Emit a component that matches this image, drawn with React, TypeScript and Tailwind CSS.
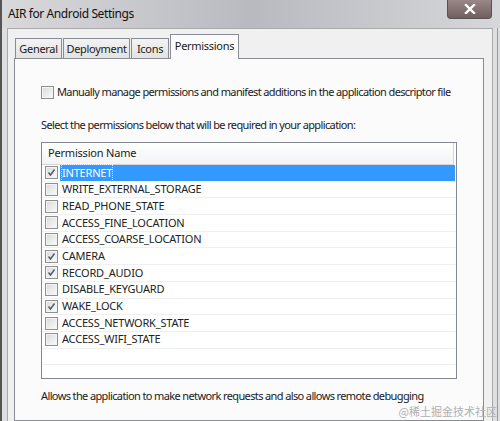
import React from "react";

const perms: { name: string; checked: boolean }[] = [
  { name: "INTERNET", checked: true },
  { name: "WRITE_EXTERNAL_STORAGE", checked: false },
  { name: "READ_PHONE_STATE", checked: false },
  { name: "ACCESS_FINE_LOCATION", checked: false },
  { name: "ACCESS_COARSE_LOCATION", checked: false },
  { name: "CAMERA", checked: true },
  { name: "RECORD_AUDIO", checked: true },
  { name: "DISABLE_KEYGUARD", checked: false },
  { name: "WAKE_LOCK", checked: true },
  { name: "ACCESS_NETWORK_STATE", checked: false },
  { name: "ACCESS_WIFI_STATE", checked: false },
];

function Check({ checked }: { checked: boolean }) {
  return (
    <div className="w-[13px] h-[13px] border border-[#8e8f8f] bg-[#f4f4f4] p-[1px] shrink-0">
      <div className="w-full h-full bg-gradient-to-br from-[#dcdcdc] to-[#f8f8f8] relative">
        {checked && (
          <svg viewBox="0 0 9 9" className="absolute inset-0 w-full h-full">
            <path d="M1.5 4.5 L3.5 7 L7.5 1.5" stroke="#4a5a6a" strokeWidth="1.4" fill="none" />
          </svg>
        )}
      </div>
    </div>
  );
}

const tabs: { label: string; w: string }[] = [
  { label: "General", w: "w-[47px]" },
  { label: "Deployment", w: "w-[67px]" },
  { label: "Icons", w: "w-[38px]" },
];

export default function App() {
  return (
    <div
      className="relative w-[500px] h-[421px] overflow-hidden flex flex-col bg-[#d4d5d8] text-[#1a1a1a]"
      style={{ fontFamily: '"Noto Sans", "Open Sans", sans-serif' }}
    >
      {/* Title bar */}
      <div className="h-[28px] shrink-0 flex items-start bg-gradient-to-r from-[#d9d9db] via-[#b9bac0] to-[#d6d7d9] border-l-2 border-[#555]">
        <div className="pl-[6px] pt-[6px] text-[12px] leading-[16px] tracking-[-0.4px] text-[#111] flex-1">AIR for Android Settings</div>
        <div className="w-[45px] h-[19px] mr-[8px] rounded-b-[4px] border border-t-0 border-[#5e4f50] bg-gradient-to-b from-[#9a8888] to-[#705f60] flex items-center justify-center">
          <svg viewBox="0 0 12 10" className="w-[12px] h-[10px]">
            <path d="M2 1 L10 9 M10 1 L2 9" stroke="#fff" strokeWidth="2.4" strokeLinecap="square" />
          </svg>
        </div>
      </div>
      {/* Body */}
      <div className="flex-1 flex min-h-0">
        <div className="w-[7px] shrink-0 bg-[#dedfe1] border-l-2 border-[#555]" />
        <div className="flex-1 min-w-0 bg-[#f0f0f0] border-l border-t border-[#a9a9a9] pl-[6px] pr-[8px] pt-[5px] flex flex-col">
          {/* Tabs */}
          <div className="flex items-end h-[24px] pl-[1px] relative z-10 text-[11px] tracking-[-0.3px]">
            {tabs.map((t) => (
              <div
                key={t.label}
                className={`${t.w} h-[20px] mr-[1px] border border-b-0 border-[#898c95] bg-gradient-to-b from-[#f3f3f3] to-[#e2e2e2] flex items-center justify-center leading-none`}
              >
                {t.label}
              </div>
            ))}
            <div className="w-[69px] h-[25px] -mb-[1px] border border-b-0 border-[#898c95] bg-[#fbfbfb] flex items-center justify-center leading-none pb-[3px]">
              Permissions
            </div>
          </div>
          {/* Panel */}
          <div className="flex-1 border border-[#898c95] bg-[#fbfbfb] pl-[26px] pt-[26px] text-[11px] tracking-[-0.62px]">
            <div className="flex items-center gap-[3px] h-[14px] whitespace-nowrap">
              <Check checked={false} />
              <span>Manually manage permissions and manifest additions in the application descriptor file</span>
            </div>
            <div className="mt-[19px] h-[14px] flex items-center whitespace-nowrap">
              Select the permissions below that will be required in your application:
            </div>
            <div className="mt-[10px] w-[416px] h-[237px] border border-[#828790] bg-white overflow-hidden flex flex-col tracking-[-0.2px]">
              <div className="h-[22px] shrink-0 w-[412px] border-b border-[#d5d5d5] bg-gradient-to-b from-[#ffffff] to-[#f3f4f6] border-r flex items-center pl-[6px]">
                Permission Name
              </div>
              {perms.map((p, i) => (
                <div key={p.name} className="h-[16.7px] shrink-0 flex items-center border-b border-[#f0f0f0] pl-[3px]">
                  <Check checked={p.checked} />
                  <div
                    className={
                      i === 0
                        ? "ml-[2px] flex-1 h-full bg-[#3399ff] text-white flex items-center pl-[2px] mr-[1px]"
                        : "ml-[2px] flex-1 h-full flex items-center pl-[2px] text-[#222]"
                    }
                  >
                    <span className={i === 0 ? "outline outline-1 outline-dotted outline-white/70" : ""}>{p.name}</span>
                  </div>
                </div>
              ))}
              <div className="h-[16.7px] shrink-0 border-b border-[#f0f0f0]" />
              <div className="h-[16.7px] shrink-0 border-b border-[#f0f0f0]" />
            </div>
            <div className="mt-[10px] h-[14px] flex items-center whitespace-nowrap">
              Allows the application to make network requests and also allows remote debugging
            </div>
          </div>
        </div>
        <div className="w-[8px] shrink-0 bg-[#dedfe1] border-l border-[#a9a9a9] flex">
          <div className="ml-[4px] w-[1px] bg-[#9a9a9a]" />
        </div>
      </div>
      <span
        className="absolute right-[3px] bottom-[4px] text-[11px] leading-none text-[#b0b0b0]"
        style={{ fontFamily: '"Noto Sans CJK SC", sans-serif' }}
      >
        @稀土掘金技术社区
      </span>
    </div>
  );
}
